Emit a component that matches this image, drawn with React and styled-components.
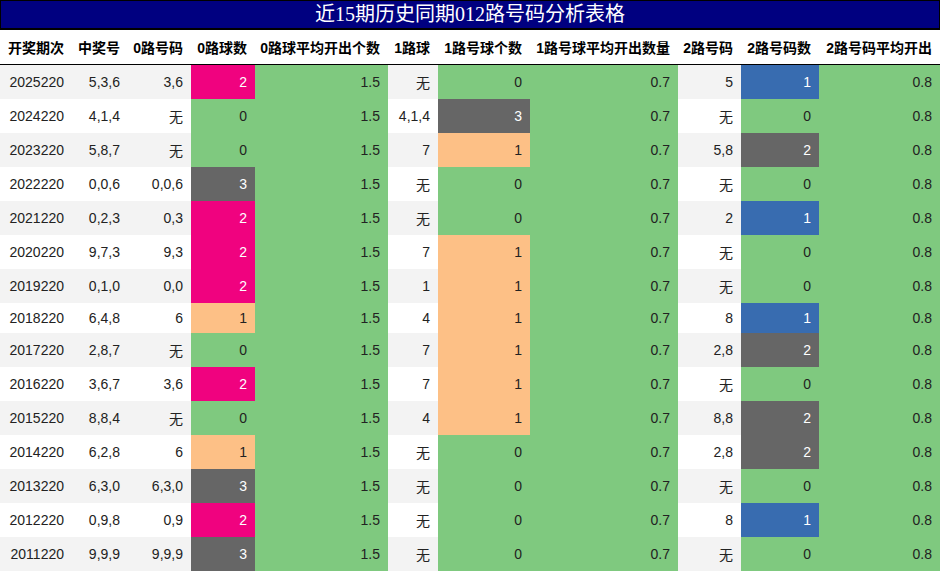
import styled, { createGlobalStyle } from 'styled-components';

const GlobalStyle = createGlobalStyle`
    body {
        margin: 0;
        background: #ffffff;
        font-family: 'Liberation Sans', 'Noto Sans CJK SC', sans-serif;
    }
`;

const Page = styled.div`
    width: 940px;
`;

const Title = styled.div`
    background-color: #000080;
    border: 1px solid #000;
    border-bottom-width: 2px;
    color: #ffffff;
    font-family: 'Liberation Serif', 'Noto Sans CJK SC', serif;
    font-size: 20px;
    line-height: 27px;
    text-align: center;
`;

const Table = styled.table`
    width: 940px;
    border-collapse: collapse;
    table-layout: fixed;
    font-size: 14px;
`;

const HeadCell = styled.th`
    font-weight: bold;
    color: #000;
    text-align: right;
    padding: 7px 8px 7px 0;
    white-space: nowrap;
    border-bottom: 1px solid #000;
`;

const Row = styled.tr`
    background-color: ${(p) => (p.$striped ? '#f3f3f3' : '#ffffff')};
`;

const Cell = styled.td`
    text-align: right;
    padding: 7px 8px 7px 0;
    white-space: nowrap;
    color: ${(p) => (p.$light ? '#ffffff' : '#222222')};
    background-color: ${(p) => p.$bg || 'transparent'};
`;

const GREEN = '#7fc97f';
const ORANGE = '#fdc086';
const PINK = '#f0027f';
const GRAY = '#666666';
const BLUE = '#386cb0';

const palette0 = { 0: GREEN, 1: ORANGE, 2: PINK, 3: GRAY };
const palette1 = { 0: GREEN, 1: ORANGE, 2: PINK, 3: GRAY };
const palette2 = { 0: GREEN, 1: BLUE, 2: GRAY, 3: PINK };
const lightBg = [PINK, GRAY, BLUE];

const widths = [72, 56, 63, 64, 133, 50, 92, 148, 63, 78, 121];

const headers = [
    '开奖期次', '中奖号', '0路号码', '0路球数', '0路球平均开出个数', '1路球',
    '1路号球个数', '1路号球平均开出数量', '2路号码', '2路号码数', '2路号码平均开出',
];

const rows = [
    ['2025220', '5,3,6', '3,6', 2, '无', 0, '5', 1],
    ['2024220', '4,1,4', '无', 0, '4,1,4', 3, '无', 0],
    ['2023220', '5,8,7', '无', 0, '7', 1, '5,8', 2],
    ['2022220', '0,0,6', '0,0,6', 3, '无', 0, '无', 0],
    ['2021220', '0,2,3', '0,3', 2, '无', 0, '2', 1],
    ['2020220', '9,7,3', '9,3', 2, '7', 1, '无', 0],
    ['2019220', '0,1,0', '0,0', 2, '1', 1, '无', 0],
    ['2018220', '6,4,8', '6', 1, '4', 1, '8', 1],
    ['2017220', '2,8,7', '无', 0, '7', 1, '2,8', 2],
    ['2016220', '3,6,7', '3,6', 2, '7', 1, '无', 0],
    ['2015220', '8,8,4', '无', 0, '4', 1, '8,8', 2],
    ['2014220', '6,2,8', '6', 1, '无', 0, '2,8', 2],
    ['2013220', '6,3,0', '6,3,0', 3, '无', 0, '无', 0],
    ['2012220', '0,9,8', '0,9', 2, '无', 0, '8', 1],
    ['2011220', '9,9,9', '9,9,9', 3, '无', 0, '无', 0],
];

function CountCell({ value, palette }) {
    const bg = palette[value];
    return (
        <Cell $bg={bg} $light={lightBg.includes(bg)}>
            {value}
        </Cell>
    );
}

function App() {
    return (
        <Page>
            <GlobalStyle />
            <Title>近15期历史同期012路号码分析表格</Title>
            <Table>
                <colgroup>
                    {widths.map((w, i) => (
                        <col key={i} style={{ width: w }} />
                    ))}
                </colgroup>
                <thead>
                    <tr>
                        {headers.map((h) => (
                            <HeadCell key={h}>{h}</HeadCell>
                        ))}
                    </tr>
                </thead>
                <tbody>
                    {rows.map(([issue, win, n0, c0, n1, c1, n2, c2], i) => (
                        <Row key={issue} $striped={i % 2 === 0}>
                            <Cell>{issue}</Cell>
                            <Cell>{win}</Cell>
                            <Cell>{n0}</Cell>
                            <CountCell value={c0} palette={palette0} />
                            <Cell $bg={GREEN}>1.5</Cell>
                            <Cell>{n1}</Cell>
                            <CountCell value={c1} palette={palette1} />
                            <Cell $bg={GREEN}>0.7</Cell>
                            <Cell>{n2}</Cell>
                            <CountCell value={c2} palette={palette2} />
                            <Cell $bg={GREEN}>0.8</Cell>
                        </Row>
                    ))}
                </tbody>
            </Table>
        </Page>
    );
}

export default App;
